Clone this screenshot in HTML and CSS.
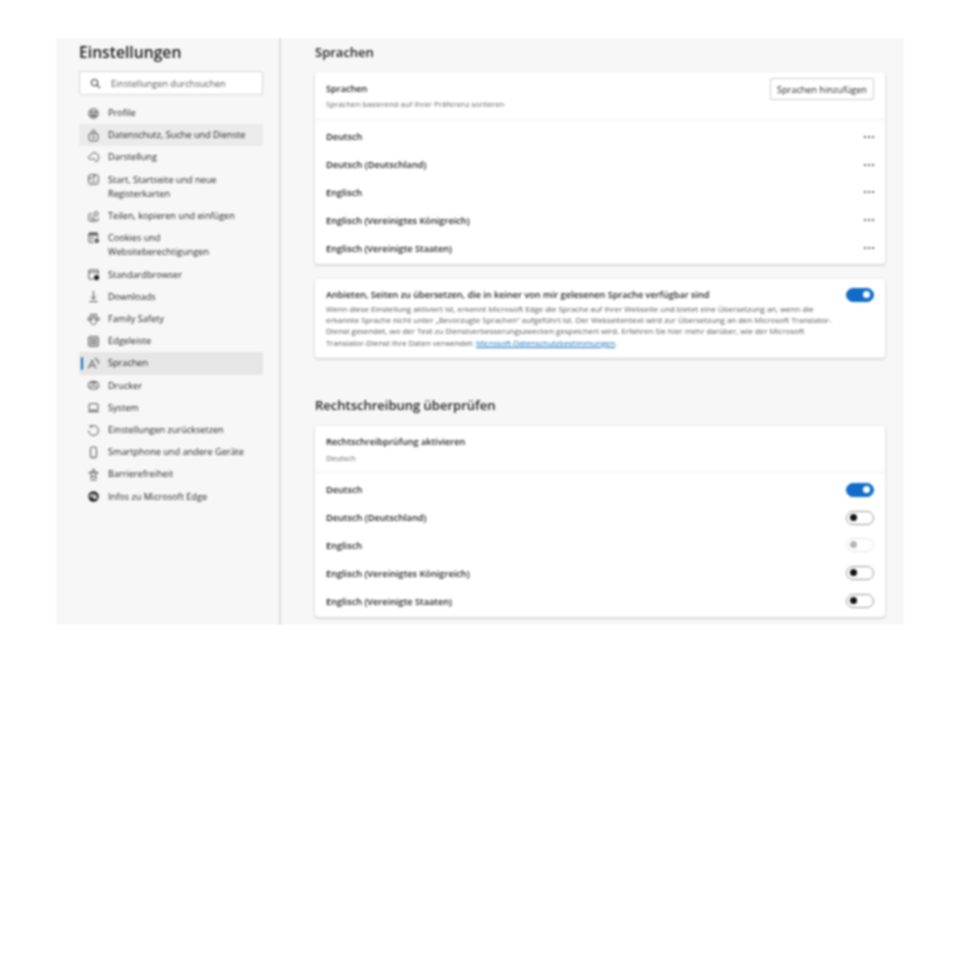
FILE: index.html
```html
<!DOCTYPE html>
<html lang="de">

<head>
    <meta charset="UTF-8">
    <title>Einstellungen</title>
    <link rel="stylesheet" href="styles.css">
</head>

<body>
    <div class="window">
        <!-- Sidebar -->
        <aside class="sidebar">
            <h1 class="sidebar-title">Einstellungen</h1>
            <div class="search">
                <svg class="search-icon" viewBox="0 0 12 12"><circle cx="5" cy="5" r="3.4"/><path d="M7.5 7.5 11 11"/></svg>
                <span>Einstellungen durchsuchen</span>
            </div>
            <nav class="nav">
                <a class="nav-item" href="#">
                    <svg viewBox="0 0 14 14"><circle cx="7" cy="7" r="5.2"/><circle class="fill" cx="5" cy="5.500" r="1.700"/><circle class="fill" cx="9" cy="5.500" r="1.700"/><path class="fill" d="M2.600 8h8.800a4.800 4.800 0 0 1-8.800 0z"/></svg>
                    <span>Profile</span>
                </a>
                <a class="nav-item hover" href="#">
                    <svg viewBox="0 0 14 14"><path d="M3.500 5h7a1.300 1.300 0 0 1 1.300 1.300v4.700a1.800 1.800 0 0 1-1.800 1.800H4a1.800 1.800 0 0 1-1.800-1.800V6.300A1.300 1.300 0 0 1 3.500 5z"/><path d="M5.200 5V3a1.800 1.800 0 0 1 3.600 0v2"/><circle cx="7" cy="9" r="1"/></svg>
                    <span>Datenschutz, Suche und Dienste</span>
                </a>
                <a class="nav-item" href="#">
                    <svg viewBox="0 0 14 14"><path d="M1.300 7.500 5.500 2.600c1.700-1.400 5.200-.8 6.600 1.900 1 2.400.3 5.300-1.500 7-.9.500-1.400-.3-1.500-1.200-.3-1.500-1.700-2.300-3-1.700-1.500.7-3 1-4.800-1.100z"/></svg>
                    <span>Darstellung</span>
                </a>
                <a class="nav-item two-line" href="#">
                    <svg viewBox="0 0 14 14"><rect x="1.800" y="1.800" width="10.400" height="10.400" rx="2.200"/><path d="M1.800 5.500h6.200V1.800"/><path d="M4.500 9.300h5"/></svg>
                    <span>Start, Startseite und neue<br>Registerkarten</span>
                </a>
                <a class="nav-item" href="#">
                    <svg viewBox="0 0 14 14"><path d="M5.500 4H3.500A1.500 1.500 0 0 0 2 5.500v5A1.500 1.500 0 0 0 3.500 12h7a1.500 1.500 0 0 0 1.500-1.500V8.500"/><circle cx="9.800" cy="4" r="2.200"/><path d="M4.500 8.500a1.500 1.500 0 0 1 3 0M4.500 10h5"/></svg>
                    <span>Teilen, kopieren und einfügen</span>
                </a>
                <a class="nav-item two-line" href="#">
                    <svg viewBox="0 0 14 14"><path d="M7 12.300H3a1 1 0 0 1-1-1V3a1 1 0 0 1 1-1h7.500a1 1 0 0 1 1 1v4"/><path class="fill" d="M2 2h9.500v3H2z"/><path d="M4 7.200h3M4 9.400h2"/><circle class="fill" cx="10.500" cy="10.500" r="2.600"/></svg>
                    <span>Cookies und<br>Websiteberechtigungen</span>
                </a>
                <a class="nav-item" href="#">
                    <svg viewBox="0 0 14 14"><path d="M7 12H3a1 1 0 0 1-1-1V3a1 1 0 0 1 1-1h8a1 1 0 0 1 1 1v4"/><path d="M2 4.500h10"/><circle class="dark" cx="10.300" cy="10.300" r="2.800"/></svg>
                    <span>Standardbrowser</span>
                </a>
                <a class="nav-item" href="#">
                    <svg viewBox="0 0 14 14"><path d="M7 1.200v8.500M4 7l3 2.800L10 7M2.500 12.500h9"/></svg>
                    <span>Downloads</span>
                </a>
                <a class="nav-item" href="#">
                    <svg viewBox="0 0 14 14"><circle cx="5" cy="2.800" r="1.700"/><circle cx="9" cy="2.800" r="1.700"/><circle cx="2.400" cy="6.500" r="1.600"/><circle cx="11.600" cy="6.500" r="1.600"/><path d="M7 6c1.600 0 3 1.300 3 3 0 1.800-1.400 3.600-3 3.600S4 10.800 4 9c0-1.700 1.400-3 3-3z"/></svg>
                    <span>Family Safety</span>
                </a>
                <a class="nav-item" href="#">
                    <svg viewBox="0 0 14 14"><rect class="soft" x="1.800" y="1.800" width="10.400" height="10.400" rx="1.500"/><path d="M4.500 4.500h1.500v1.500H4.500zM8 4.500h1.500v1.500H8zM4.500 8h1.500v1.500H4.500zM8 8h1.500v1.500H8z"/></svg>
                    <span>Edgeleiste</span>
                </a>
                <a class="nav-item active" href="#">
                    <svg viewBox="0 0 14 14"><path d="M1.500 12.500 5.500 3.500l4 9M3 9.300h5"/><path d="M8 1.800c2.500-.4 4.500 1.500 4.500 3.700 0 .9-.3 1.700-.8 2.400M9.800 3.600l1.200 1"/></svg>
                    <span>Sprachen</span>
                </a>
                <a class="nav-item" href="#">
                    <svg viewBox="0 0 14 14"><rect x="1.300" y="2.800" width="11.400" height="8" rx="4"/><path class="fill" d="M4 2.800h6v2H4z"/><path d="M4.200 9V7.200h5.600V9"/></svg>
                    <span>Drucker</span>
                </a>
                <a class="nav-item" href="#">
                    <svg viewBox="0 0 14 14"><rect x="2.200" y="3" width="9.600" height="6.800" rx="1"/><path d="M1 11.500h12"/></svg>
                    <span>System</span>
                </a>
                <a class="nav-item" href="#">
                    <svg viewBox="0 0 14 14"><path d="M3.800 2.800A5.300 5.300 0 1 1 1.700 7"/><path d="M3.500 1v2.200h2.200"/></svg>
                    <span>Einstellungen zurücksetzen</span>
                </a>
                <a class="nav-item" href="#">
                    <svg viewBox="0 0 14 14"><rect x="3.800" y="1.300" width="6.400" height="11.400" rx="1.300"/><path d="M6.300 11h1.400"/></svg>
                    <span>Smartphone und andere Geräte</span>
                </a>
                <a class="nav-item" href="#">
                    <svg viewBox="0 0 14 14"><circle cx="7" cy="2.700" r="1.400"/><path d="M2 4.800h10L8.800 7.200l1.200 3.300L7 9l-3 1.500 1.200-3.300z"/><path d="M3.500 12.800h7"/></svg>
                    <span>Barrierefreiheit</span>
                </a>
                <a class="nav-item" href="#">
                    <svg viewBox="0 0 14 14"><circle class="dark" cx="7" cy="7" r="5.600"/><path class="cut" d="M3 8c.5-2.500 3-3.800 5-3.200 1.300.4 2 1.400 1.800 2.400H6c.2 1.600 2.500 2.400 5 1.200"/></svg>
                    <span>Infos zu Microsoft Edge</span>
                </a>
            </nav>
        </aside>

        <!-- Main content -->
        <main class="content">
            <h2 class="section-title">Sprachen</h2>
            <section class="card">
                <div class="card-head">
                    <div>
                        <div class="card-title">Sprachen</div>
                        <div class="card-sub">Sprachen basierend auf Ihrer Präferenz sortieren</div>
                    </div>
                    <button class="add-btn">Sprachen hinzufügen</button>
                </div>
                <div class="rows">
                    <div class="row"><span>Deutsch</span><span class="dots"><i></i><i></i><i></i></span></div>
                    <div class="row"><span>Deutsch (Deutschland)</span><span class="dots"><i></i><i></i><i></i></span></div>
                    <div class="row"><span>Englisch</span><span class="dots"><i></i><i></i><i></i></span></div>
                    <div class="row"><span>Englisch (Vereinigtes Königreich)</span><span class="dots"><i></i><i></i><i></i></span></div>
                    <div class="row"><span>Englisch (Vereinigte Staaten)</span><span class="dots"><i></i><i></i><i></i></span></div>
                </div>
            </section>

            <section class="card offer">
                <div class="offer-top">
                    <div class="card-title">Anbieten, Seiten zu übersetzen, die in keiner von mir gelesenen Sprache verfügbar sind</div>
                    <span class="toggle on"></span>
                </div>
                <p class="offer-text">Wenn diese Einstellung aktiviert ist, erkennt Microsoft Edge die Sprache auf Ihrer Webseite und bietet eine Übersetzung an, wenn die<br>erkannte Sprache nicht unter „Bevorzugte Sprachen“ aufgeführt ist. Der Webseitentext wird zur Übersetzung an den Microsoft Translator-<br>Dienst gesendet, wo der Text zu Dienstverbesserungszwecken gespeichert wird. Erfahren Sie hier mehr darüber, wie der Microsoft<br>Translator-Dienst Ihre Daten verwendet: <a href="#">Microsoft-Datenschutzbestimmungen</a>.</p>
            </section>

            <h2 class="section-title spell">Rechtschreibung überprüfen</h2>
            <section class="card">
                <div class="card-head spell-head">
                    <div>
                        <div class="card-title">Rechtschreibprüfung aktivieren</div>
                        <div class="card-sub">Deutsch</div>
                    </div>
                </div>
                <div class="rows">
                    <div class="row"><span>Deutsch</span><span class="toggle on"></span></div>
                    <div class="row"><span>Deutsch (Deutschland)</span><span class="toggle"></span></div>
                    <div class="row"><span>Englisch</span><span class="toggle disabled"></span></div>
                    <div class="row"><span>Englisch (Vereinigtes Königreich)</span><span class="toggle"></span></div>
                    <div class="row"><span>Englisch (Vereinigte Staaten)</span><span class="toggle"></span></div>
                </div>
            </section>
        </main>
    </div>
</body>

</html>
```

FILE: styles.css
```css
body {
    margin: 0;
    background-color: #fff;
    font-family: 'Open Sans', 'Noto Sans', sans-serif;
    color: #333;
}

.window {
    display: flex;
    width: 848px;
    height: 587px;
    margin: 38px 0 0 56px;
    background-color: #f7f7f7;
    overflow: hidden;
    filter: blur(.8px);
}

/* Sidebar */
.sidebar {
    box-sizing: border-box;
    width: 225px;
    padding: 0 16px 0 23px;
    border-right: 2px solid #dedede;
    flex-shrink: 0;
}

.sidebar-title {
    margin: 4px 0 9px;
    font-size: 15.700px;
    line-height: 20px;
    font-weight: 600;
    color: #1a1a1a;
}

.search {
    box-sizing: border-box;
    display: flex;
    align-items: center;
    gap: 10px;
    height: 24px;
    padding-left: 10px;
    background-color: #fff;
    border: 1px solid #d4d4d4;
    border-radius: 2px;
    font-size: 9.100px;
    color: #555;
}

.search-icon {
    width: 11px;
    height: 11px;
    fill: none;
    stroke: #444;
    stroke-width: 1.200;
}

.nav {
    margin-top: 7px;
}

.nav-item {
    display: flex;
    align-items: center;
    gap: 8px;
    min-height: 22.200px;
    padding-left: 8px;
    border-radius: 2px;
    position: relative;
    font-size: 9.150px;
    line-height: 14.300px;
    color: #222;
    text-decoration: none;
}

.nav-item.two-line {
    padding-top: 3.950px;
    padding-bottom: 3.950px;
}

.nav-item svg {
    width: 13px;
    height: 13px;
    flex-shrink: 0;
    fill: none;
    stroke: #444;
    stroke-width: 1;
}

.nav-item.two-line svg {
    align-self: flex-start;
}

.nav-item svg .fill {
    fill: #666;
    stroke: none;
}

.nav-item svg .soft {
    fill: #ddd;
}

.nav-item svg .dark {
    fill: #1c1c1c;
    stroke: none;
}

.nav-item svg .cut {
    stroke: #f7f7f7;
    stroke-width: 1.300;
}

.nav-item.hover {
    background-color: #ebebeb;
}

.nav-item.active {
    background-color: #e6e6e6;
}

.nav-item.active::before {
    content: '';
    position: absolute;
    left: 2px;
    top: 5px;
    bottom: 5px;
    width: 2px;
    border-radius: 1px;
    background-color: #0f6cbd;
}

/* Main content */
.content {
    flex: 1;
    padding: 0 19px 0 34px;
}

.section-title {
    margin: 5px 0 10px;
    font-size: 13px;
    line-height: 19px;
    font-weight: 600;
    color: #222;
}

.section-title.spell {
    margin: 38px 0 11px;
}

.card {
    background-color: #fff;
    border-radius: 3px;
    box-shadow: 0 1px 3px rgba(0, 0, 0, .22);
}

.card-head {
    display: flex;
    justify-content: space-between;
    align-items: flex-start;
    box-sizing: border-box;
    height: 48px;
    padding: 6px 11px 0;
    border-bottom: 1px solid #f2f2f2;
}

.card-title {
    margin-top: 4px;
    font-size: 9.150px;
    line-height: 14px;
    font-weight: 600;
    color: #222;
}

.card-sub {
    font-size: 7.800px;
    line-height: 16px;
    color: #666;
}

.add-btn {
    box-sizing: border-box;
    width: 104px;
    height: 22px;
    padding: 0;
    background-color: #fff;
    border: 1px solid #ccc;
    border-radius: 2px;
    font-family: inherit;
    font-size: 9.100px;
    color: #222;
}

.rows {
    padding: 3px 11px 2px;
}

.row {
    display: flex;
    justify-content: space-between;
    align-items: center;
    height: 27.800px;
    font-size: 9.200px;
    font-weight: 600;
    color: #222;
}

.dots {
    display: flex;
    gap: 2px;
}

.dots i {
    width: 2px;
    height: 2px;
    border-radius: 50%;
    background-color: #333;
}

.toggle {
    box-sizing: border-box;
    position: relative;
    width: 28px;
    height: 14px;
    background-color: #fff;
    border: 1.500px solid #999;
    border-radius: 7px;
}

.toggle::after {
    content: '';
    position: absolute;
    left: 2.500px;
    top: 2px;
    width: 7px;
    height: 7px;
    border-radius: 50%;
    background-color: #111;
}

.toggle.on {
    background-color: #0f6cc9;
    border-color: #0f6cc9;
}

.toggle.on::after {
    left: auto;
    right: 3px;
    top: 2px;
    width: 7px;
    height: 7px;
    background-color: #fff;
}

.toggle.disabled {
    border-color: #e4e4e4;
}

.toggle.disabled::after {
    background-color: #b5b5b5;
}

.offer {
    margin-top: 15px;
    height: 79px;
    padding: 9px 11px 0;
    box-sizing: border-box;
}

.offer-top {
    display: flex;
    justify-content: space-between;
    align-items: center;
}

.offer-top .card-title {
    margin-top: 0;
}

.offer-text {
    margin: 2px 0 0;
    font-size: 7.900px;
    line-height: 11.200px;
    color: #555;
}

.offer-text a {
    color: #0f6cbd;
}

.spell-head {
    height: 47px;
    padding-top: 5px;
}

.spell-head .card-sub {
    margin-top: 1px;
}
```
